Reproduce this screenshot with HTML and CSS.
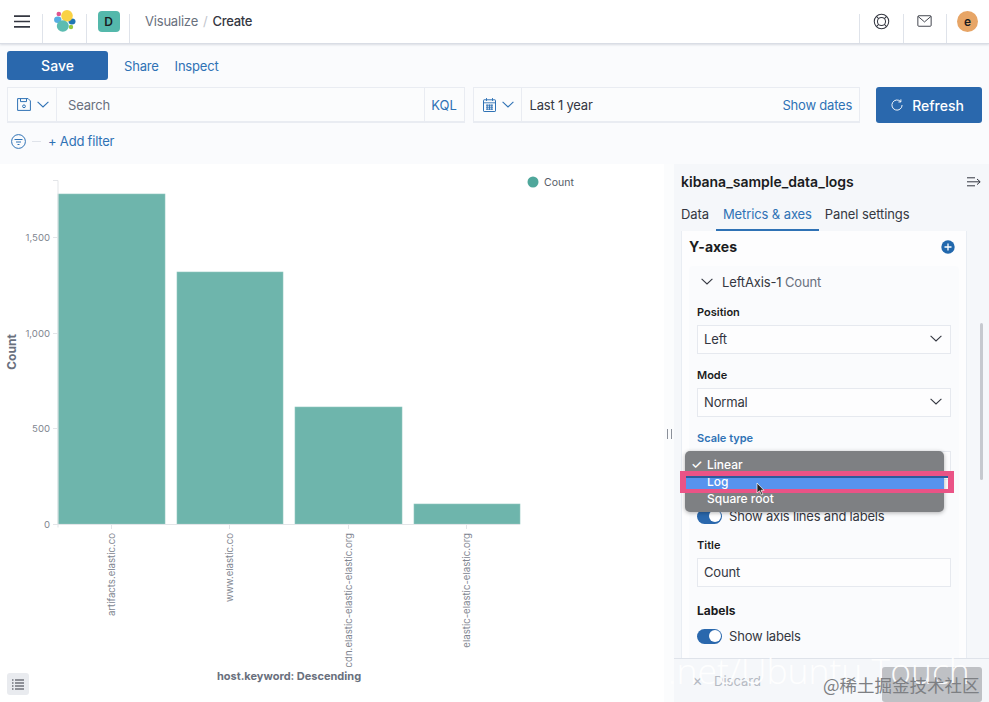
FILE: index.html
```html
<!DOCTYPE html>
<html lang="en">
<head>
<meta charset="utf-8">
<title>Visualize - Create</title>
<link rel="stylesheet" href="styles.css">
</head>
<body>
<div class="app">
  <header class="header">
    <div class="cell cell-menu">
      <svg width="16" height="13" viewBox="0 0 16 13"><path d="M0 1.200h16M0 6.500h16M0 11.800h16" stroke="#343741" stroke-width="1.700" fill="none"/></svg>
    </div>
    <div class="cell cell-logo">
      <svg width="22" height="22" viewBox="0 0 22 22">
        <circle cx="4.800" cy="4" r="2.300" fill="#e0558f"/>
        <ellipse cx="3.800" cy="9.800" rx="3.700" ry="3.300" fill="#55aee2"/>
        <ellipse cx="18" cy="11.500" rx="3.500" ry="3" fill="#1f76b4"/>
        <circle cx="17" cy="17" r="2.200" fill="#96c93d"/>
        <circle cx="13" cy="5.800" r="5.800" fill="#f9d244"/>
        <ellipse cx="8.800" cy="16" rx="6" ry="5.800" fill="#5cbcb1"/>
      </svg>
    </div>
    <div class="cell cell-space"><span class="space-badge">D</span></div>
    <nav class="crumbs"><span class="crumb-muted">Visualize</span><span class="crumb-sep">/</span><span class="crumb-current">Create</span></nav>
    <div class="cell cell-right cell-help">
      <svg width="17" height="17" viewBox="0 0 16 16" fill="none" stroke="#343741" stroke-width="1"><circle cx="8" cy="8" r="6.800"/><circle cx="8" cy="8" r="3.800"/><path d="M3.200 3.200l2.100 2.100M12.800 3.200l-2.100 2.100M3.200 12.800l2.100-2.100M12.800 12.800l-2.100-2.100"/></svg>
    </div>
    <div class="cell cell-right cell-mail">
      <svg width="15" height="12" viewBox="0 0 16 13" fill="none" stroke="#343741" stroke-width="1"><rect x=".8" y=".8" width="14.400" height="11.400" rx="1"/><path d="M1 1.500l7 6 7-6"/></svg>
    </div>
    <div class="cell cell-right cell-user"><span class="avatar">e</span></div>
  </header>

  <section class="toolbar">
    <div class="actions">
      <button class="btn-save">Save</button>
      <a class="link">Share</a>
      <a class="link">Inspect</a>
    </div>
    <div class="query-row">
      <div class="query-box">
        <div class="prepend prepend-save">
          <svg width="14" height="13" viewBox="0 0 14 13" fill="none" stroke="#2f72b5"><path d="M.6.600h10.500l2.300 2.300v9.500H.6z"/><path d="M3.500.6v3h6v-3"/><circle cx="7" cy="8.300" r="1.400"/></svg>
          <svg class="chev" width="12" height="7" viewBox="0 0 12 7" fill="none" stroke="#2f72b5" stroke-width="1.100"><path d="M.6.800L6 6l5.400-5.200"/></svg>
        </div>
        <div class="search-text">Search</div>
        <div class="kql">KQL</div>
      </div>
      <div class="date-box">
        <div class="prepend prepend-date">
          <svg width="13" height="14" viewBox="0 0 13 14" fill="none" stroke="#2f72b5"><rect x=".5" y="1.800" width="12" height="11.700" rx=".6"/><path d="M.5 4.800h12M3.500 0v3M9.500 0v3M3 7.200h7M3 9.200h7M3 11.200h7M4.200 6.500v5.500M6.500 6.500v5.500M8.800 6.500v5.500" stroke-width=".9"/></svg>
          <svg class="chev" width="12" height="7" viewBox="0 0 12 7" fill="none" stroke="#2f72b5" stroke-width="1.100"><path d="M.6.800L6 6l5.400-5.200"/></svg>
        </div>
        <div class="date-text">Last 1 year</div>
        <a class="link show-dates">Show dates</a>
      </div>
      <button class="btn-refresh">
        <svg width="12" height="12" viewBox="0 0 13 13" fill="none" stroke="#fff" stroke-width="1"><path d="M10.500 2.800A5.500 5.500 0 1 0 12 6.500"/><path d="M10.700.4v2.800H8"/></svg>
        Refresh
      </button>
    </div>
    <div class="filter-row">
      <svg width="15" height="15" viewBox="0 0 15 15" fill="none" stroke="#2f72b5"><circle cx="7.500" cy="7.500" r="6.900"/><path d="M3.500 5.500h8M5 8h5M6.500 10.500h2"/></svg>
      <span class="filter-dash"></span>
      <a class="link">+ Add filter</a>
    </div>
  </section>

  <main class="workspace">
    <section class="chart">
      <svg class="chart-svg" width="664" height="538" viewBox="0 164 664 538">
        <g fill="#6eb5ac" stroke="#8fc7bf" stroke-width=".6">
          <rect x="58" y="194" width="107" height="330"/>
          <rect x="177" y="272" width="106" height="252"/>
          <rect x="295" y="407" width="107" height="117"/>
          <rect x="414" y="504" width="106" height="20"/>
        </g>
        <g stroke="#e3e5e8" fill="none">
          <path d="M53 180.500h5v347M53 237.500h5M53 333.500h5M53 428.500h5M53 524.500h467"/>
          <path d="M111.500 525v4M229.500 525v4M348.500 525v4M466.500 525v4"/>
        </g>
        <g class="tick" text-anchor="end">
          <text x="50" y="241">1,500</text>
          <text x="50" y="337">1,000</text>
          <text x="50" y="432">500</text>
          <text x="50" y="528">0</text>
        </g>
        <g class="tick" text-anchor="end">
          <text transform="translate(115 533) rotate(-90)">artifacts.elastic.co</text>
          <text transform="translate(233 533) rotate(-90)">www.elastic.co</text>
          <text transform="translate(352 533) rotate(-90)">cdn.elastic-elastic-elastic.org</text>
          <text transform="translate(470 533) rotate(-90)">elastic-elastic-elastic.org</text>
        </g>
        <text class="axis-title" transform="translate(16 352) rotate(-90)" text-anchor="middle">Count</text>
        <text class="axis-title axis-title-x" x="289" y="680" text-anchor="middle">host.keyword: Descending</text>
        <circle cx="533" cy="182" r="5.500" fill="#4fa79b"/>
        <text class="legend-text" x="544" y="186">Count</text>
      </svg>
      <button class="legend-toggle">
        <svg width="12" height="11" viewBox="0 0 12 11" fill="none" stroke="#343741" stroke-width="1.200"><path d="M0 1h1.500M3 1h9M0 4h1.500M3 4h9M0 7h1.500M3 7h9M0 10h1.500M3 10h9"/></svg>
      </button>
    </section>

    <div class="resizer"><span></span></div>

    <aside class="panel">
      <div class="panel-head">
        <h2 class="index-name">kibana_sample_data_logs</h2>
        <svg width="14" height="10" viewBox="0 0 14 10" fill="none" stroke="#343741"><path d="M0 .8h8M0 4.800h13M0 8.800h8M10 2l3.200 2.800L10 7.600"/></svg>
      </div>
      <div class="tabs">
        <span class="tab">Data</span>
        <span class="tab tab-active">Metrics &amp; axes</span>
        <span class="tab">Panel settings</span>
      </div>
      <div class="panel-body">
        <div class="card">
          <div class="card-head">
            <h3>Y-axes</h3>
            <svg width="14" height="14" viewBox="0 0 14 14"><circle cx="7" cy="7" r="6.700" fill="#2268ad"/><path d="M7 3.500v7M3.500 7h7" stroke="#fff" stroke-width="1.300"/></svg>
          </div>
          <div class="axis-group">
            <div class="axis-head">
              <svg width="12" height="7" viewBox="0 0 12 7" fill="none" stroke="#343741" stroke-width="1.100"><path d="M.6.800L6 6l5.400-5.200"/></svg>
              <span>LeftAxis-1 <span class="axis-sub">Count</span></span>
            </div>
            <label class="field-label field-first">Position</label>
            <div class="select">Left<svg width="12" height="7" viewBox="0 0 12 7" fill="none" stroke="#343741" stroke-width="1.100"><path d="M.6.800L6 6l5.400-5.200"/></svg></div>
            <label class="field-label">Mode</label>
            <div class="select">Normal<svg width="12" height="7" viewBox="0 0 12 7" fill="none" stroke="#343741" stroke-width="1.100"><path d="M.6.800L6 6l5.400-5.200"/></svg></div>
            <label class="field-label field-label-active">Scale type</label>
            <div class="select"></div>
            <div class="switch-row switch-row-axis"><span class="switch"></span>Show axis lines and labels</div>
            <label class="field-label field-title">Title</label>
            <div class="select">Count</div>
            <h4 class="labels-title">Labels</h4>
            <div class="switch-row"><span class="switch"></span>Show labels</div>
          </div>
        </div>
        <div class="scroll-thumb"></div>
      </div>
      <div class="panel-foot">
        <span class="discard"><span class="discard-x">✕</span>Discard</span>
        <span class="update"></span>
      </div>
    </aside>
  </main>

  <div class="native-menu">
    <div class="menu-item"><span class="check">✓</span>Linear</div>
    <div class="menu-item menu-selected">Log</div>
    <div class="menu-item">Square root</div>
  </div>
  <div class="highlight"></div>
  <svg class="cursor" width="9" height="14" viewBox="0 0 9 14"><path d="M1 1v10l2.500-2.200L5.500 13l1.500-.7-2-4h3z" fill="#222" stroke="#fff" stroke-width=".7"/></svg>
  <div class="wm-big">.net/Ubuntu Touch</div>
  <div class="wm-small">@稀土掘金技术社区</div>
</div>
</body>
</html>
```
FILE: styles.css
```css
* { box-sizing: border-box; }
html, body { margin: 0; height: 100%; }
body { font-family: Inter, "Noto Sans", sans-serif; color: #343741; background: #fff; overflow: hidden; }
.app { position: relative; width: 989px; height: 702px; display: flex; flex-direction: column; overflow: hidden; }

.header { height: 44px; flex: none; display: flex; align-items: stretch; background: #fff; border-bottom: 1px solid #d9dde5; box-shadow: 0 1px 2px rgba(120,130,150,.25); position: relative; z-index: 2; }
.cell { display: flex; align-items: center; justify-content: center; position: relative; padding-bottom: 1px; }
.cell::after { content: ""; position: absolute; right: 0; top: 14px; bottom: 0; width: 1px; background: #dfe3ea; }
.cell-menu { width: 43px; }
.cell-logo { width: 44px; }
.cell-space { width: 43px; }
.space-badge { width: 22px; height: 21px; border-radius: 4px; background: #54b8ab; font-size: 12px; font-weight: 600; color: #1a1c21; display: flex; align-items: center; justify-content: center; }
.crumbs { flex: 1; display: flex; align-items: center; padding: 0 0 1px 15px; font-size: 13px; letter-spacing: -.2px; }
.crumb-muted { color: #69707d; }
.crumb-sep { color: #c2c6cd; margin: 0 5px 0 5px; }
.crumb-current { color: #343741; font-weight: 500; letter-spacing: -.3px; }
.cell-right { width: 44px; }
.cell-right::after { left: 0; right: auto; }
.cell-help { width: 44px; }
.cell-mail { width: 43px; }
.cell-user { width: 43px; }
.cell-user .avatar { width: 21px; height: 21px; border-radius: 50%; background: #e7a566; font-size: 12px; font-weight: 600; color: #1a1c21; display: flex; align-items: center; justify-content: center; }

.toolbar { height: 120px; flex: none; background: #fafbfd; padding: 7px 7px 0 7px; }
.actions { height: 29px; display: flex; align-items: center; gap: 16px; }
.btn-save { width: 101px; height: 29px; border: 0; border-radius: 3px; background: #2a68ad; color: #fff; font: 500 14px Inter, sans-serif; }
.link { color: #2f72b5; font-size: 13px; letter-spacing: -.2px; }
.query-row { display: flex; align-items: center; margin-top: 7px; }
.query-box { width: 458px; height: 36px; display: flex; align-items: center; background: #fbfcfd; border: 1px solid #e9ecf2; border-bottom-width: 2px; }
.date-box { width: 388px; height: 36px; margin-left: 8px; display: flex; align-items: center; background: #fbfcfd; border: 1px solid #e9ecf2; border-bottom-width: 2px; }
.prepend { height: 100%; display: flex; align-items: center; gap: 6px; border-right: 1px solid #e9ecf2; }
.prepend-save { width: 49px; padding-left: 9px; }
.prepend-date { width: 48px; padding-left: 9px; }
.search-text { flex: 1; padding: 1px 0 0 11px; font-size: 13px; letter-spacing: -.2px; color: #69707d; }
.kql { width: 40px; height: 100%; display: flex; align-items: center; justify-content: center; border-left: 1px solid #e9ecf2; font-size: 13px; color: #2f72b5; }
.date-text { flex: 1; padding-left: 8px; font-size: 13px; letter-spacing: -.2px; color: #343741; }
.show-dates { padding-right: 7px; }
.btn-refresh { width: 106px; height: 36px; margin-left: 16px; border: 0; border-radius: 3px; background: #2a68ad; color: #fff; font: 500 14px Inter, sans-serif; display: flex; align-items: center; justify-content: center; gap: 9px; padding-left: 3px; }
.filter-row { display: flex; align-items: center; height: 20px; margin-top: 8px; padding-left: 4px; }
.filter-dash { width: 9px; height: 1px; background: #dfe3ea; margin: 0 7px 0 6px; }

.workspace { flex: 1; display: flex; min-height: 0; }
.chart { width: 664px; flex: none; background: #fff; position: relative; }
.chart-svg { display: block; }
.tick { font-size: 9.600px; fill: #818691; font-family: Inter, sans-serif; }
.axis-title { font-size: 12px; font-weight: 700; fill: #69707d; font-family: Inter, sans-serif; }
.axis-title-x { font-size: 11px; }
.legend-text { font-size: 10.500px; fill: #555b66; font-family: Inter, sans-serif; }
.legend-toggle { position: absolute; left: 7px; bottom: 7px; width: 22px; height: 22px; padding: 0; border: 0; border-radius: 3px; background: #e9ebef; display: flex; align-items: center; justify-content: center; }

.resizer { width: 10px; flex: none; background: #fbfcfd; display: flex; align-items: center; justify-content: center; padding-top: 2px; }
.resizer span { width: 5px; height: 10px; border: solid #8b909a; border-width: 0 1.500px; }

.panel { flex: 1; background: #f5f7fa; display: flex; flex-direction: column; min-width: 0; position: relative; }
.panel-head { display: flex; align-items: center; justify-content: space-between; padding: 3px 8px 0 7px; height: 32px; }
.index-name { margin: 0; font-size: 14px; font-weight: 600; color: #1a1c21; }
.tabs { display: flex; margin-top: 3px; height: 32px; padding-left: 7px; font-size: 13px; letter-spacing: -.1px; }
.tab { padding: 7px 0 0; color: #343741; }
.tab:first-child { padding-right: 7px; }
.tab-active { color: #2f72b5; border-bottom: 2px solid #2f72b5; padding: 7px 7px 0; margin-right: 6px; }
.panel-body { flex: 1; min-height: 0; position: relative; padding-left: 7px; overflow: hidden; }
.card { width: 286px; height: 100%; background: #fdfdfe; border: 1px solid #e9edf3; border-width: 0 1px; padding: 0 7px; }
.card-head { display: flex; align-items: center; justify-content: space-between; height: 33px; margin-bottom: 2px; padding: 0 4px 2px 0; }
.card-head h3 { margin: 0; font-size: 14px; font-weight: 700; color: #1a1c21; }
.axis-group { background: #fafbfd; border-radius: 4px; padding: 0 8px; height: 500px; }
.axis-head { height: 31px; display: flex; align-items: center; gap: 9px; padding-left: 4px; font-size: 13px; letter-spacing: -.15px; color: #343741; }
.axis-sub { color: #69707d; }
.field-label { display: block; font-size: 11px; font-weight: 600; color: #1a1c21; margin: 14px 0 5px; line-height: 15px; }
.field-first { margin-top: 8px; }
.field-title { margin-top: 12px; }
.field-label-active { color: #2f72b5; }
.select { height: 29px; display: flex; align-items: center; justify-content: space-between; padding: 0 8px 2px 6px; background: #fdfdfe; border: 1px solid #e6e9ef; font-size: 13px; letter-spacing: -.15px; color: #343741; }
.switch-row { display: flex; align-items: center; gap: 7px; height: 20px; font-size: 13px; letter-spacing: -.2px; color: #343741; }
.switch-row-axis { margin-top: 26px; }
.switch { width: 25px; height: 15px; border-radius: 8px; background: #2a68ad; position: relative; flex: none; }
.switch::after { content: ""; position: absolute; right: 1.500px; top: 1.500px; width: 12px; height: 12px; border-radius: 50%; background: #fff; }
.labels-title { margin: 16px 0 7px; font-size: 12px; font-weight: 700; color: #1a1c21; line-height: 16px; }
.scroll-thumb { position: absolute; right: 6px; top: 92px; width: 3px; height: 157px; background: #c6c9cf; border-radius: 2px; }
.panel-foot { position: absolute; left: 0; right: 0; bottom: 0; height: 44px; background: #f5f7fa; border-top: 1px solid #dfe3ea; display: flex; align-items: center; justify-content: space-between; padding: 0 7px 0 18px; }
.discard { font-size: 13px; color: #b5bac3; padding-top: 1px; }
.discard-x { margin-right: 11px; }
.update { width: 100px; height: 35px; background: #bfc1c5; border-radius: 3px; margin-top: 8px; }

.native-menu { position: absolute; left: 685px; top: 451px; width: 259px; height: 61px; padding-top: 5px; border-radius: 5px; background: #7e8083; color: #fff; font-size: 12px; font-weight: 500; box-shadow: 0 1px 4px rgba(0,0,0,.3); z-index: 3; }
.menu-item { height: 17px; line-height: 17px; padding-left: 22px; position: relative; }
.check { position: absolute; left: 6px; font-size: 13px; }
.menu-selected { background: #5793ee; }
.highlight { position: absolute; left: 680px; top: 471px; width: 274px; height: 22px; border: solid #ea5386; border-width: 5px 6px 4px; box-shadow: inset 0 2px 0 #2c5c9c; z-index: 4; }
.cursor { position: absolute; left: 756px; top: 482px; z-index: 5; }
.wm-big { position: absolute; left: 668px; top: 648px; font-size: 35.500px; line-height: 44px; color: rgba(255,255,255,.95); font-family: "Open Sans", sans-serif; font-weight: 300; z-index: 6; white-space: nowrap; }
.wm-small { position: absolute; left: 823px; top: 675px; font-size: 17.500px; line-height: 20px; color: #7d7f83; font-family: "Noto Sans CJK SC", sans-serif; z-index: 7; white-space: nowrap; }
```
